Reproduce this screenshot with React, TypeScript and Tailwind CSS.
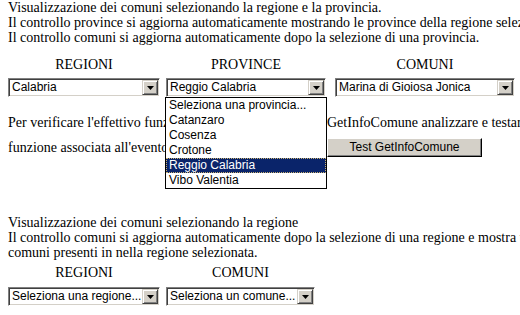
import React from 'react';

const serif = "font-['Liberation_Serif','Times_New_Roman',serif]";
const sans = "font-['Liberation_Sans',Arial,sans-serif]";

const Arrow = () => (
  <div className="w-[16px] h-[15px] shrink-0 flex items-center justify-center bg-[#d4d0c8] border border-t-[#d4d0c8] border-l-[#d4d0c8] border-r-[#404040] border-b-[#404040] shadow-[inset_1px_1px_0_#ffffff,inset_-1px_-1px_0_#808080]">
    <svg width="7" height="4" viewBox="0 0 7 4">
      <polygon points="0,0 7,0 3.5,4" fill="#000" />
    </svg>
  </div>
);

const Combo = ({ value, width }: { value: string; width: string }) => (
  <div
    className={`${width} h-[19px] flex bg-white border border-t-[#808080] border-l-[#808080] border-r-white border-b-white shadow-[inset_1px_1px_0_#404040,inset_-1px_-1px_0_#d4d0c8] p-[1px]`}
  >
    <div className={`flex-1 pl-[2px] text-[12px] leading-[15px] text-black overflow-hidden whitespace-nowrap ${sans}`}>
      {value}
    </div>
    <Arrow />
  </div>
);

const province = ['Seleziona una provincia...', 'Catanzaro', 'Cosenza', 'Crotone', 'Reggio Calabria', 'Vibo Valentia'];

const DropList = () => (
  <div className={`absolute z-10 top-full left-[-1px] w-[162px] bg-white border border-black text-[12px] ${sans}`}>
    {province.map((p) =>
      p === 'Reggio Calabria' ? (
        <div
          key={p}
          className="h-[15px] leading-[15px] pl-[3px] bg-[#0a246a] text-white outline outline-1 outline-dotted outline-[#c8b070] -outline-offset-1"
        >
          {p}
        </div>
      ) : (
        <div key={p} className="h-[15px] leading-[15px] pl-[3px] text-black">
          {p}
        </div>
      )
    )}
  </div>
);

const Column = ({
  label,
  value,
  width,
  gap,
  open,
}: {
  label: string;
  value: string;
  width: string;
  gap: string;
  open?: boolean;
}) => (
  <div className={`flex flex-col items-center ${gap}`}>
    <div className="h-[15px] leading-[15px]">{label}</div>
    <div className="relative">
      <Combo value={value} width={width} />
      {open && <DropList />}
    </div>
  </div>
);

export default function App() {
  return (
    <div className={`w-[520px] h-[315px] overflow-hidden bg-white text-black ${serif}`}>
      <div className="w-[800px] pl-[8px] text-[14px] leading-[15px] whitespace-nowrap">
        {/* Regioni / province / comuni */}
        <div>Visualizzazione dei comuni selezionando la regione e la provincia.</div>
        <div>Il controllo province si aggiorna automaticamente mostrando le province della regione selezionata.</div>
        <div>Il controllo comuni si aggiorna automaticamente dopo la selezione di una provincia.</div>

        <div className="mt-[12px] flex items-start">
          <Column label="REGIONI" value="Calabria" width="w-[152px]" gap="gap-[6px]" />
          <div className="ml-[6px]">
            <Column label="PROVINCE" value="Reggio Calabria" width="w-[160px]" gap="gap-[6px]" open />
          </div>
          <div className="ml-[9px]">
            <Column label="COMUNI" value="Marina di Gioiosa Jonica" width="w-[180px]" gap="gap-[6px]" />
          </div>
        </div>

        <div className="mt-[18px] h-[15px]">
          <span className="inline-block w-[319px] overflow-hidden align-top">
            Per verificare l'effettivo funzionamento del controllo premere il pulsante Test
          </span>
          GetInfoComune analizzare e testare la
        </div>
        <div className="mt-[8px] flex items-center h-[19px]">
          <span className="inline-block w-[319px]">funzione associata all'evento</span>
          <button
            className={`w-[155px] h-[19px] bg-[#d4d0c8] border border-t-white border-l-white border-r-black border-b-black shadow-[inset_-1px_-1px_0_#808080] text-[12px] leading-[15px] text-black ${sans}`}
          >
            Test GetInfoComune
          </button>
        </div>

        {/* Solo regioni / comuni */}
        <div className="mt-[58px]">Visualizzazione dei comuni selezionando la regione</div>
        <div>Il controllo comuni si aggiorna automaticamente dopo la selezione di una regione e mostra tutti i</div>
        <div>comuni presenti in nella regione selezionata.</div>

        <div className="mt-[5px] flex items-start">
          <Column label="REGIONI" value="Seleziona una regione..." width="w-[152px]" gap="gap-[7px]" />
          <div className="ml-[6px]">
            <Column label="COMUNI" value="Seleziona un comune..." width="w-[149px]" gap="gap-[7px]" />
          </div>
        </div>
      </div>
    </div>
  );
}
